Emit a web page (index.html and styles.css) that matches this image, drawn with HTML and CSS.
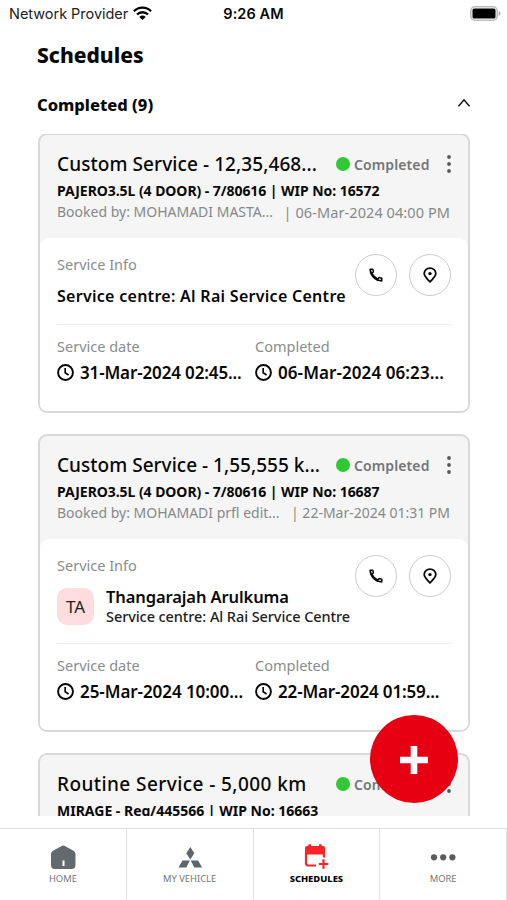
FILE: index.html
```
<!DOCTYPE html>
<html lang="en">
<head>
<meta charset="utf-8">
<title>Schedules</title>
<link rel="stylesheet" href="styles.css">
</head>
<body>
<svg class="defs" aria-hidden="true">
  <symbol id="clock" viewBox="0 0 16 16"><circle cx="8" cy="8" r="7" fill="none" stroke="currentColor" stroke-width="1.8"/><path d="M7.7 3.8v4.5l3.2 2" fill="none" stroke="currentColor" stroke-width="1.6"/></symbol>
  <symbol id="phone" viewBox="0 0 16 16"><path d="M2.2 2.2h2.600l.6 2.800-2.200 1.600zM13.800 13.800v-2.600l-2.800-.6-1.600 2.200z" fill="none" stroke="currentColor" stroke-width="1.500" stroke-linejoin="round"/><path d="M2.200 2.300c0 6.400 5.100 11.500 11.500 11.500M4 6.200c1.300 2.800 3 4.500 5.800 5.800" fill="none" stroke="currentColor" stroke-width="1.400"/></symbol>
  <symbol id="pin" viewBox="0 0 16 16"><path d="M8 14.800C4.200 11.300 2.200 8.900 2.200 6.600a5.800 5.500 0 0 1 11.600 0c0 2.300-2 4.700-5.800 8.200z" fill="none" stroke="currentColor" stroke-width="1.800"/><circle cx="8" cy="6.600" r="1.700" fill="currentColor"/></symbol>
  <symbol id="kebab" viewBox="0 0 4 18"><circle cx="2" cy="2" r="1.900" fill="currentColor"/><circle cx="2" cy="9" r="1.900" fill="currentColor"/><circle cx="2" cy="16" r="1.900" fill="currentColor"/></symbol>
</svg>
<div class="phone">
  <header class="statusbar">
    <div class="carrier"><span>Network Provider</span>
      <svg width="19" height="15" viewBox="0 0 19 15"><g fill="none" stroke="#000" stroke-width="2.300"><path d="M.9 5.200a12.300 12.300 0 0 1 17.200 0"/><path d="M4 8.500a7.900 7.900 0 0 1 11 0"/></g><path d="M9.500 14 6.300 10.900a4.600 4.600 0 0 1 6.400 0z"/></svg>
    </div>
    <div class="time">9:26 AM</div>
    <div class="battery"><svg width="31" height="15" viewBox="0 0 31 15"><rect x=".8" y=".8" width="26.400" height="13.400" rx="4" fill="#fff" stroke="#bcbcbc" stroke-width="1.600"/><rect x="2.500" y="2.500" width="23" height="10" rx="1.500" fill="#000"/><path d="M28.700 5c2.300.8 2.300 4.200 0 5z" fill="#aaa"/></svg></div>
  </header>
  <h1>Schedules</h1>
  <div class="section">
    <h2>Completed (9)</h2>
    <svg width="14" height="10" viewBox="0 0 14 10"><path d="M1.500 8.300 7 1.800l5.500 6.500" fill="none" stroke="#111" stroke-width="1.500"/></svg>
  </div>

  <main class="list">
    <article class="card">
      <div class="card-head">
        <div class="title-row"><h3>Custom Service - 12,35,468...</h3><div class="state"><i></i>Completed</div><svg class="kebab"><use href="#kebab"/></svg></div>
        <p class="vehicle">PAJERO3.5L (4 DOOR) - 7/80616 | WIP No: 16572</p>
        <p class="booked"><span>Booked by: MOHAMADI MASTA...</span><span class="loose">| 06-Mar-2024 04:00 PM</span></p>
      </div>
      <div class="card-body">
        <div class="info">
          <div class="info-text"><p class="label">Service Info</p><p class="centre">Service centre: Al Rai Service Centre</p></div>
          <div class="actions"><span class="round"><svg><use href="#phone"/></svg></span><span class="round"><svg><use href="#pin"/></svg></span></div>
        </div>
        <div class="dates">
          <div><p class="label">Service date</p><p class="date d31"><svg><use href="#clock"/></svg>31-Mar-2024 02:45...</p></div>
          <div><p class="label">Completed</p><p class="date d06"><svg><use href="#clock"/></svg>06-Mar-2024 06:23...</p></div>
        </div>
      </div>
    </article>

    <article class="card tall">
      <div class="card-head">
        <div class="title-row"><h3 class="tight">Custom Service - 1,55,555 k...</h3><div class="state"><i></i>Completed</div><svg class="kebab"><use href="#kebab"/></svg></div>
        <p class="vehicle">PAJERO3.5L (4 DOOR) - 7/80616 | WIP No: 16687</p>
        <p class="booked"><span>Booked by: MOHAMADI prfl edit...</span><span>| 22-Mar-2024 01:31 PM</span></p>
      </div>
      <div class="card-body">
        <div class="info">
          <div class="info-text"><p class="label">Service Info</p>
            <div class="advisor"><span class="avatar">TA</span><div><p class="name">Thangarajah Arulkuma</p><p class="place">Service centre: Al Rai Service Centre</p></div></div>
          </div>
          <div class="actions"><span class="round"><svg><use href="#phone"/></svg></span><span class="round"><svg><use href="#pin"/></svg></span></div>
        </div>
        <div class="dates">
          <div><p class="label">Service date</p><p class="date d25"><svg><use href="#clock"/></svg>25-Mar-2024 10:00...</p></div>
          <div><p class="label">Completed</p><p class="date d22"><svg><use href="#clock"/></svg>22-Mar-2024 01:59...</p></div>
        </div>
      </div>
    </article>

    <article class="card">
      <div class="card-head">
        <div class="title-row"><h3 class="wide">Routine Service - 5,000 km</h3><div class="state"><i></i>Completed</div><svg class="kebab"><use href="#kebab"/></svg></div>
        <p class="vehicle mirage">MIRAGE - Reg/445566 | WIP No: 16663</p>
      </div>
    </article>
  </main>

  <nav class="tabs">
    <a class="tab"><svg width="26" height="26" viewBox="0 0 26 26"><path d="M11.300 2.200a4 4 0 0 1 4 0l7.800 4.200a4 4 0 0 1 2.400 3.500V21a4 4 0 0 1-4 4H5a4 4 0 0 1-4-4V9.900a4 4 0 0 1 2.400-3.500z" fill="#626a6e"/><rect x="12.500" y="16.500" width="2" height="5.500" fill="#fff"/></svg><span>HOME</span></a>
    <a class="tab"><svg width="26" height="26" viewBox="0 0 26 26"><path d="M13.300 3l4 6.300-4 6.200-4-6.200zM5.500 16.500h7.300L9.300 23.500H1.500zM13.800 16.500h7.300l4 7h-7.800z" fill="#5f6568"/></svg><span>MY VEHICLE</span></a>
    <a class="tab active"><svg width="26" height="26" viewBox="0 0 26 26"><path d="M4 2h16a2 2 0 0 1 2 2v6.500H2V4a2 2 0 0 1 2-2z" fill="#fa2328"/><path d="M6.600 .2v4M17.400 .2v4" stroke="#fa2328" stroke-width="2.600"/><path d="M13 21.500H5.200A2.200 2.200 0 0 1 3 19.300V9M21 9v4.500M20.500 15.200v9.500M15.800 20h9.500" fill="none" stroke="#fa2328" stroke-width="2.200"/></svg><span>SCHEDULES</span></a>
    <a class="tab"><svg width="26" height="26" viewBox="0 0 26 26"><g fill="#5c5c5c"><circle cx="4" cy="13.300" r="3.100"/><circle cx="13.200" cy="13.300" r="3.100"/><circle cx="22.400" cy="13.300" r="3.100"/></g></svg><span>MORE</span></a>
  </nav>
  <button class="fab" aria-label="Add"><svg width="28" height="28" viewBox="0 0 28 28"><path d="M14 0v28M0 14h28" stroke="#fff" stroke-width="6.600"/></svg></button>
</div>
</body>
</html>
```
FILE: styles.css
```
* { box-sizing: border-box; margin: 0; padding: 0; }
body { background: #fff; color: #080808; font-family: "Noto Sans", sans-serif; }
svg { display: block; flex: none; }
.defs { position: absolute; width: 0; height: 0; }
.phone { position: relative; display: flex; flex-direction: column; width: 507px; height: 900px; overflow: hidden; }

.statusbar { display: grid; grid-template-columns: 1fr auto 1fr; align-items: center; height: 28px; padding: 0 6px 0 6px; font: 14.5px/28px Inter, sans-serif; }
.carrier { display: flex; align-items: center; gap: 5px; padding-left: 3px; color: #222; white-space: nowrap; letter-spacing: -.03px; }
.carrier svg { margin-top: -2px; }
.time { font-weight: 600; letter-spacing: .08px; }
.battery { justify-self: end; margin-top: -1px; }

h1 { margin: 12px 0 0 37px; font-size: 21px; font-weight: 800; line-height: 30px; }
.section { display: flex; justify-content: space-between; align-items: center; height: 24px; margin: 23px 36px 17px 37px; }
h2 { font-size: 16.5px; font-weight: 800; line-height: 24px; }
.section svg { margin-top: -5px; }

.list { height: 682px; overflow: hidden; padding: 0 37px 0 38px; display: flex; flex-direction: column; gap: 21px; }
.card { flex: none; height: 280px; border: 2px solid #d9d9d9; border-radius: 9px; background: #f5f5f5; overflow: hidden; white-space: nowrap; }
.card:first-child { margin-top: -1px; }
.card.tall { height: 298px; }
.card-head { height: 103px; padding: 16px 18px 0 17px; }
.title-row { display: flex; align-items: center; height: 26px; }
h3 { flex: 1; font-size: 19px; font-weight: 500; line-height: 26px; letter-spacing: .08px; }
h3.tight { letter-spacing: .02px; }
h3.wide { letter-spacing: .42px; }
.state { display: flex; align-items: center; gap: 4px; margin-right: 17.500px; font-size: 14px; font-weight: 600; color: #737678; letter-spacing: .1px; }
.state i { width: 14px; height: 14px; border-radius: 50%; background: #30c934; }
.kebab { width: 4px; height: 18px; margin-right: -1px; color: #55595b; }
.vehicle { margin-top: 4px; font-size: 14px; font-weight: 700; line-height: 20px; letter-spacing: -.055px; }
.mirage { letter-spacing: 0; }
.booked { display: flex; justify-content: space-between; margin-top: 1px; font-size: 14px; line-height: 20px; color: #868989; }
.loose { font-size: 14.5px; letter-spacing: .08px; }

.card-body { height: 100%; padding: 0 16px 0 17px; border-radius: 9px 9px 0 0; background: #fff; }
.info { display: flex; justify-content: space-between; height: 87px; padding-top: 16px; border-bottom: 1px solid #ececec; }
.tall .info { height: 105px; }
.info-text { width: 0; }
.label { font-size: 14.5px; line-height: 20px; color: #8a8d8d; }
.dates .label { margin-top: -1px; }
.centre { margin-top: 11px; font-size: 16px; font-weight: 600; line-height: 22px; letter-spacing: .28px; }
.actions { display: flex; gap: 12px; margin-right: 1px; }
.round { display: grid; place-items: center; width: 42px; height: 42px; border: 1.5px solid #ccc; border-radius: 50%; }
.round svg { width: 16px; height: 16px; }
.advisor { display: flex; align-items: center; gap: 12px; margin-top: 12px; }
.avatar { flex: none; display: grid; place-items: center; width: 37px; height: 37px; border-radius: 10px; background: #ffdcdd; font-size: 17px; color: #222; }
.name { font-size: 16.5px; font-weight: 600; line-height: 20px; letter-spacing: -.1px; }
.place { font-size: 14.5px; font-weight: 500; line-height: 18px; letter-spacing: -.08px; color: #222; }
.dates { display: grid; grid-template-columns: 198px 1fr; padding-top: 12px; }
.date { display: flex; align-items: center; gap: 6px; margin-top: 5px; font-size: 17px; font-weight: 600; line-height: 24px; }
.date svg { width: 17px; height: 17px; margin-top: -1px; }
.d31 { letter-spacing: -.14px; }
.d06 { letter-spacing: .08px; }
.d25 { letter-spacing: -.07px; }
.d22 { letter-spacing: -.16px; }

.tabs { display: grid; grid-template-columns: repeat(4, 1fr); height: 72px; margin-top: auto; border-top: 1px solid #dde1e3; }
.tab { display: flex; flex-direction: column; align-items: center; padding-top: 15px; border-right: 1px solid #dde1e3; font-size: 9.4px; line-height: 14px; color: #74787a; }
.tab span { margin-top: 2px; }
.tab.active { font-weight: 800; color: #000; }

.fab { position: absolute; left: 370px; top: 715px; display: grid; place-items: center; width: 88px; height: 88px; border: 0; border-radius: 50%; background: #e60012; }
.fab svg { margin-top: 2px; }
```
